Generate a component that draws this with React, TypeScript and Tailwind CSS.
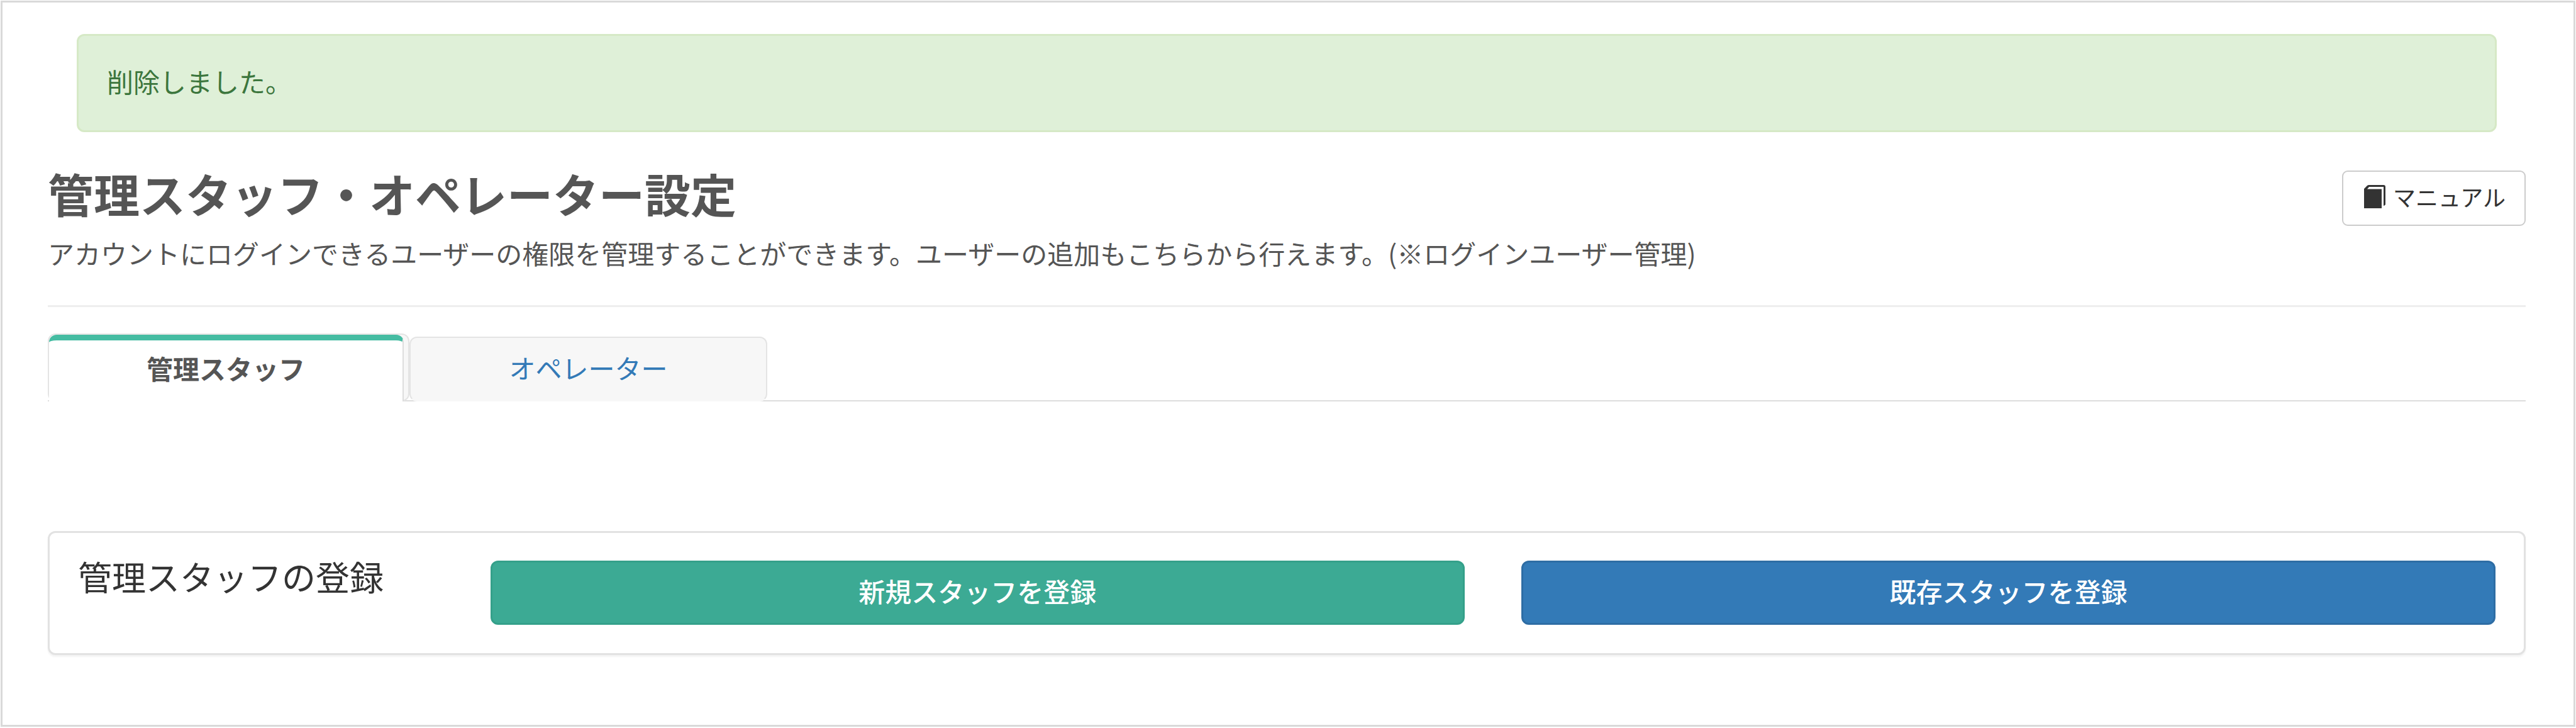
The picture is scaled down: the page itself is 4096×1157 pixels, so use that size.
import React from "react";

function BookIcon() {
  return (
    <svg viewBox="0 0 34 37" className="h-[37px] w-[34px] shrink-0" fill="none" aria-hidden="true">
      <path d="M0 6 L5 1 Q6 0 8 0 H31 Q34 0 34 3 V31 Q33 33 31 33 V3 H8 L5 6.500 H28 V37 H0 Z" fill="#333333" />
    </svg>
  );
}

function Alert() {
  return (
    <div
      role="status"
      className="mx-[46px] rounded-xl border-[3px] border-[#d6e9c6] bg-[#dff0d8] px-[45px] pt-[42px] pb-12 text-[42px] leading-[60px] text-[#3c763d]"
    >
      <p>削除しました。</p>
    </div>
  );
}

function PageHeader() {
  return (
    <header className="mt-14 flex items-start justify-between border-b-[3px] border-[#eeeeee] pb-[53px] text-[#555555]">
      <div>
        <h1 className="text-[73px] leading-[80px] font-bold">管理スタッフ・オペレーター設定</h1>
        <p className="mt-[26px] text-[42px] leading-[60px]">
          アカウントにログインできるユーザーの権限を管理することができます。ユーザーの追加もこちらから行えます。(※ログインユーザー管理)
        </p>
      </div>
      <button
        type="button"
        className="mt-[5px] flex shrink-0 items-center gap-3 rounded-[9px] border-2 border-[#cccccc] bg-white pt-[14px] pr-[30px] pb-5 pl-[33px] text-[36px] leading-[50px] text-[#333333]"
      >
        <BookIcon />
        マニュアル
      </button>
    </header>
  );
}

function Tabs() {
  return (
    <nav className="mt-[42px] border-b-2 border-[#dddddd]">
      <ul className="-mb-[2px] flex items-end text-center text-[42px] leading-[60px]">
        <li className="w-[575px] rounded-xl border-2 border-[#e4e4e4] bg-[#f7f7f7] pr-[7px]">
          <a
            href="#staff"
            aria-current="page"
            className="-mb-[2px] block rounded-t-xl border-t-[9px] border-r-2 border-t-[#45bca2] border-r-[#dddddd] bg-white pt-[14px] pb-[23px] font-bold text-[#555555]"
          >
            管理スタッフ
          </a>
        </li>
        <li className="w-[569px] rounded-xl border-2 border-[#e4e4e4] border-b-[#f7f7f7] bg-[#f7f7f7]">
          <a href="#operator" className="block pt-[17px] pb-[22px] text-[#337ab7]">
            オペレーター
          </a>
        </li>
      </ul>
    </nav>
  );
}

function RegisterPanel() {
  return (
    <section
      aria-labelledby="register-title"
      className="mt-[206px] grid grid-cols-12 rounded-xl border-[3px] border-[#e2e2e2] bg-white pt-[33px] pb-[45px] shadow-[0_3px_3px_rgba(0,0,0,0.05)]"
    >
      <h2
        id="register-title"
        className="col-span-2 pl-[45px] text-[54px] leading-[72px] whitespace-nowrap text-[#333333]"
      >
        管理スタッフの登録
      </h2>
      <div className="col-span-5 px-[45px] pt-[11px]">
        <button
          type="button"
          className="w-full rounded-xl border-[3px] border-[#35a08a] bg-[#3caa94] pt-[15px] pb-[21px] text-[42px] leading-[60px] font-medium text-white"
        >
          新規スタッフを登録
        </button>
      </div>
      <div className="col-span-5 px-[45px] pt-[11px]">
        <button
          type="button"
          className="w-full rounded-xl border-[3px] border-[#2e6da4] bg-[#337ab7] pt-[15px] pb-[21px] text-[42px] leading-[60px] font-medium text-white"
        >
          既存スタッフを登録
        </button>
      </div>
    </section>
  );
}

export default function App() {
  return (
    <div
      lang="ja"
      className="flex min-h-screen flex-col bg-white p-px pb-[2px] font-['Noto_Sans_CJK_JP',sans-serif]"
    >
      <main className="grow border-[3px] border-[#d9d9d9] pt-[50px] pr-[76px] pb-16 pl-[72px]">
        <Alert />
        <PageHeader />
        <Tabs />
        <RegisterPanel />
      </main>
    </div>
  );
}
